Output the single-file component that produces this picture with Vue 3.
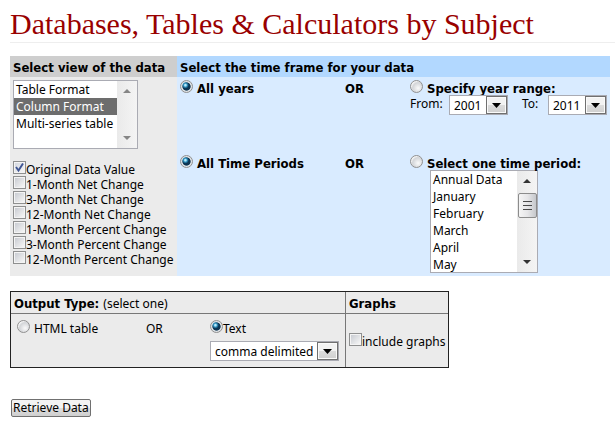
<script setup>
import { ref } from 'vue'

const view = ref(['Column Format'])
const views = ['Table Format', 'Column Format', 'Multi-series table']
const measures = ref([
  { label: 'Original Data Value', on: true },
  { label: '1-Month Net Change', on: false },
  { label: '3-Month Net Change', on: false },
  { label: '12-Month Net Change', on: false },
  { label: '1-Month Percent Change', on: false },
  { label: '3-Month Percent Change', on: false },
  { label: '12-Month Percent Change', on: false },
])
const years = ['2001', '2002', '2003', '2004', '2005', '2006', '2007', '2008', '2009', '2010', '2011']
const fromYear = ref('2001')
const toYear = ref('2011')
const yearMode = ref('all')
const periodMode = ref('all')
const periods = [
  'Annual Data', 'January', 'February', 'March', 'April', 'May', 'June',
  'July', 'August', 'September', 'October', 'November', 'December',
]
const period = ref([])
const output = ref('text')
const delimiter = ref('comma delimited')
const graphs = ref(false)
</script>

<template>
  <main class="page">
    <h1>Databases, Tables &amp; Calculators by Subject</h1>
    <form @submit.prevent>
      <div class="options">
        <section class="view">
          <h2>Select view of the data</h2>
          <div class="view-body">
            <div class="listbox">
              <select v-model="view" multiple size="4" aria-label="Select view of the data">
                <option v-for="v in views" :key="v">{{ v }}</option>
              </select>
              <span class="bar" aria-hidden="true">
                <svg viewBox="0 0 10 5" class="tri off"><path d="M5 0L10 5H0z" /></svg>
                <svg viewBox="0 0 10 5" class="tri off"><path d="M0 0H10L5 5z" /></svg>
              </span>
            </div>
            <div class="checks">
              <label v-for="m in measures" :key="m.label"><input v-model="m.on" type="checkbox" /><span>{{ m.label }}</span></label>
            </div>
          </div>
        </section>

        <section class="time">
          <h2>Select the time frame for your data</h2>
          <div class="time-row">
            <label class="radio"><input v-model="yearMode" type="radio" value="all" name="years" /><span>All years</span></label>
            <span class="or">OR</span>
            <div>
              <label class="radio"><input v-model="yearMode" type="radio" value="range" name="years" /><span>Specify year range:</span></label>
              <div class="range">
                <label for="from">From:</label>
                <span class="drop year">
                  <select id="from" v-model="fromYear"><option v-for="y in years" :key="y">{{ y }}</option></select>
                  <span class="arrow" aria-hidden="true"><svg viewBox="0 0 9 5"><path d="M0 0H9L4.500 5z" /></svg></span>
                </span>
                <label for="to" class="to">To:</label>
                <span class="drop year">
                  <select id="to" v-model="toYear"><option v-for="y in years" :key="y">{{ y }}</option></select>
                  <span class="arrow" aria-hidden="true"><svg viewBox="0 0 9 5"><path d="M0 0H9L4.500 5z" /></svg></span>
                </span>
              </div>
            </div>
          </div>
          <div class="time-row">
            <label class="radio"><input v-model="periodMode" type="radio" value="all" name="periods" /><span>All Time Periods</span></label>
            <span class="or">OR</span>
            <div>
              <label class="radio"><input v-model="periodMode" type="radio" value="one" name="periods" /><span>Select one time period:</span></label>
              <div class="listbox periods">
                <select v-model="period" multiple size="6" aria-label="Select one time period">
                  <option v-for="p in periods" :key="p">{{ p }}</option>
                </select>
                <span class="bar" aria-hidden="true">
                  <svg viewBox="0 0 10 5" class="tri"><path d="M5 0L10 5H0z" /></svg>
                  <span class="thumb"><i /><i /><i /></span>
                  <svg viewBox="0 0 10 5" class="tri"><path d="M0 0H10L5 5z" /></svg>
                </span>
              </div>
            </div>
          </div>
        </section>
      </div>

      <div class="output">
        <section class="type">
          <h3>Output Type: <span>(select one)</span></h3>
          <div class="type-body">
            <label class="radio"><input v-model="output" type="radio" value="html" name="output" /><span>HTML table</span></label>
            <span class="or">OR</span>
            <div>
              <label class="radio tight"><input v-model="output" type="radio" value="text" name="output" /><span>Text</span></label>
              <span class="drop delim">
                <select v-model="delimiter" aria-label="Text delimiter">
                  <option>comma delimited</option>
                  <option>space delimited</option>
                  <option>tab delimited</option>
                </select>
                <span class="arrow" aria-hidden="true"><svg viewBox="0 0 9 5"><path d="M0 0H9L4.500 5z" /></svg></span>
              </span>
            </div>
          </div>
        </section>
        <section class="graphs">
          <h3>Graphs</h3>
          <div class="checks"><label><input v-model="graphs" type="checkbox" /><span>include graphs</span></label></div>
        </section>
      </div>

      <button type="submit">Retrieve Data</button>
    </form>
  </main>
</template>

<style>
body {
  background: #fff;
}
</style>

<style scoped>
* {
  box-sizing: border-box;
}
.page {
  padding: 6px 0 12px 10px;
  font: 12px/15px "Noto Sans", Tahoma, sans-serif;
  color: #000;
}
h1 {
  margin: 0;
  height: 37px;
  border-bottom: 1px solid #eee;
  font: 30px/36px "Liberation Serif", serif;
  color: #900;
  white-space: nowrap;
}
h2,
h3 {
  margin: 0;
  padding: 4px 3px 2px;
  font: bold 13px/15px "DejaVu Sans Condensed", Tahoma, sans-serif;
  white-space: nowrap;
}
h3 {
  border-bottom: 1px solid #777;
}
h3 span {
  font: 12px/15px "Noto Sans", Tahoma, sans-serif;
}
.options {
  display: grid;
  grid-template-columns: 167px 1fr;
  margin: 13px 5px 0 0;
}
.view {
  background: #ebebeb;
}
.view h2 {
  background: #cecece;
}
.view-body {
  padding: 3px;
}
.time {
  background: #d9ebff;
}
.time h2 {
  background: #b2d8ff;
}
.time-row {
  display: grid;
  grid-template-columns: 165px 65px 1fr;
  align-items: start;
  padding: 3px 3px 0;
  min-height: 75px;
}
.time-row:last-child {
  padding-bottom: 3px;
}
.time-row .radio,
.time-row .or {
  font: bold 13px/15px "DejaVu Sans Condensed", Tahoma, sans-serif;
}
.or {
  padding-top: 1px;
}
.listbox {
  display: flex;
  width: 125px;
  height: 69px;
  border: 1px solid #aaabb3;
  background: #fff;
}
.listbox select {
  flex: 1;
  min-width: 0;
  height: 100%;
  margin: 0;
  padding: 0;
  border: 0;
  border-radius: 0;
  outline: 0;
  background: #fff;
  font: inherit;
  color: #000;
  scrollbar-width: none;
}
.listbox option {
  height: 17px;
  min-height: 17px;
  padding: 0 2px;
}
.listbox option:checked {
  background: #6d6d6d linear-gradient(#6d6d6d, #6d6d6d);
  color: #fff;
}
.periods {
  width: 108px;
  height: 103px;
  margin-left: 20px;
}
.bar {
  display: flex;
  flex: 0 0 20px;
  flex-direction: column;
  align-items: center;
  justify-content: space-between;
  padding: 8px 0;
  background: linear-gradient(90deg, #eaeaea, #f4f4f4);
}
.tri {
  width: 8px;
  height: 4px;
  fill: #333;
}
.tri.off {
  fill: #858585;
}
.thumb {
  display: flex;
  flex-direction: column;
  align-items: center;
  justify-content: center;
  gap: 3px;
  width: 19px;
  height: 25px;
  margin: 10px 0 auto;
  border: 1px solid #8c8c8c;
  border-radius: 2px;
  background: linear-gradient(90deg, #f5f5f5, #e6e6e8 50%, #c6c8cc);
}
.thumb i {
  width: 9px;
  height: 1px;
  background: #4a4a4a;
}
.checks label {
  display: flex;
  height: 15px;
  line-height: 15px;
  white-space: nowrap;
}
.view .checks {
  padding: 12px 0 7px;
}
.checks span,
.radio span {
  padding-top: 1px;
}
input {
  flex: none;
  appearance: none;
  width: 13px;
  height: 13px;
  margin: 0;
}
input[type='checkbox'] {
  border: 1px solid #8e8f8f;
  background: linear-gradient(135deg, #c9ccd2, #f6f6f6) content-box, #f4f4f4;
  padding: 1px;
}
input[type='checkbox']:checked {
  background: url("data:image/svg+xml,%3Csvg xmlns='http://www.w3.org/2000/svg' viewBox='0 0 11 11'%3E%3Cpath d='M2 5L4.500 8.500L9 1.500' fill='none' stroke='%233f5593' stroke-width='1.900'/%3E%3C/svg%3E") 0 0 / 11px 11px no-repeat padding-box, linear-gradient(135deg, #d4d8e0, #f6f6f6) content-box, #f4f4f4;
}
input[type='radio'] {
  border: 1px solid #909090;
  border-radius: 50%;
  background: radial-gradient(circle at 65% 65%, #fafafa, #d3d5d8 55%, #f4f4f4 70%);
}
input[type='radio']:checked {
  background: radial-gradient(circle at 40% 38%, #b8eafa 0 8%, #2b8fbd 20%, transparent 36%), radial-gradient(circle, #0d3553 0 48%, #dfe3e6 58%);
}
.radio {
  display: flex;
  gap: 4px;
  height: 15px;
  line-height: 15px;
  white-space: nowrap;
}
.radio.tight {
  gap: 0;
}
.range {
  display: flex;
}
.range label {
  width: 39px;
  padding-top: 1px;
}
.range .to {
  width: 40px;
  padding-left: 14px;
}
.drop {
  position: relative;
  display: block;
  height: 20px;
}
.drop select {
  appearance: none;
  display: block;
  width: 100%;
  height: 20px;
  margin: 0;
  padding: 1px 22px 0 4px;
  border: 1px solid #aaabb3;
  border-radius: 0;
  background: #fff;
  font: inherit;
  color: #000;
}
.year {
  width: 59px;
}
.delim {
  width: 129px;
  margin-top: 6px;
}
.arrow {
  position: absolute;
  top: 1px;
  right: 1px;
  display: flex;
  align-items: center;
  justify-content: center;
  width: 21px;
  height: 18px;
  border: 1px solid #707070;
  box-shadow: inset 0 0 0 1px #fafafa;
  background: linear-gradient(#f2f2f2 50%, #dcdcdc 50%, #cfcfcf);
  pointer-events: none;
}
.arrow svg {
  width: 9px;
  height: 5px;
}
.output {
  display: grid;
  grid-template-columns: 334px 103px;
  width: fit-content;
  margin-top: 15px;
  border: 1px solid #222;
  background: #ebebeb;
}
.type-body {
  display: grid;
  grid-template-columns: 129px 64px 129px;
  padding: 6px 6px;
}
.graphs {
  border-left: 1px solid #777;
}
.graphs .checks {
  padding: 19px 3px 0;
}
button {
  display: block;
  height: 18px;
  margin: 31px 0 0 1px;
  padding: 0 1px;
  border: 1px solid #707070;
  border-radius: 2px;
  background: linear-gradient(#f3f3f3 50%, #dddddd 50%, #cfcfcf);
  font: inherit;
  line-height: 16px;
  color: #000;
}
</style>
